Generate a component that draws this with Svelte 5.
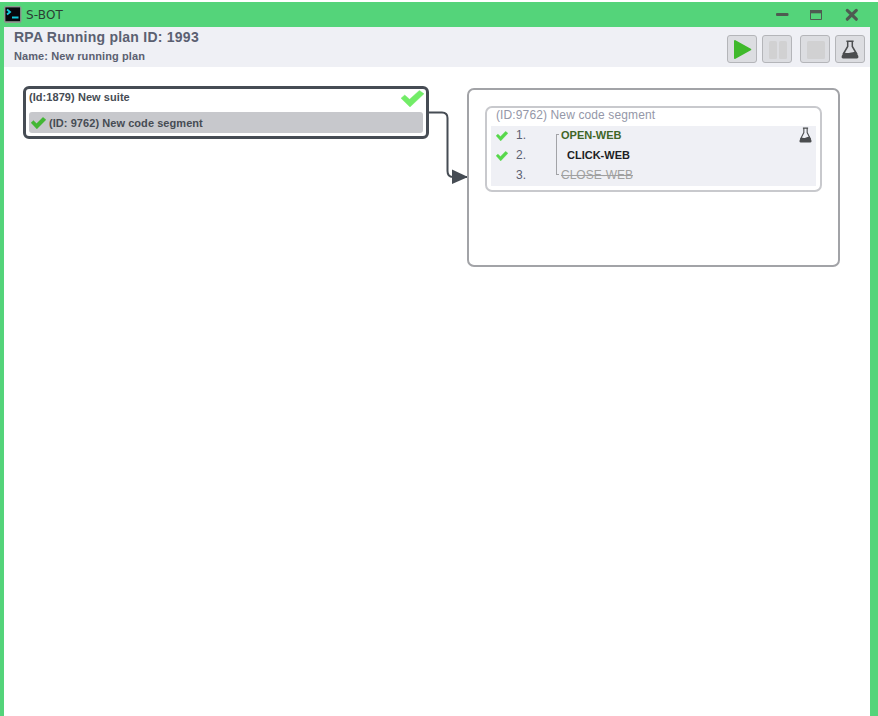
<script>
  const steps = [
    { n: '1.', label: 'OPEN-WEB', kind: 'open', done: true },
    { n: '2.', label: 'CLICK-WEB', kind: 'click', done: true },
    { n: '3.', label: 'CLOSE-WEB', kind: 'close', done: false }
  ];
</script>

{#snippet check(w, h, color)}
  <svg width={w} height={h} viewBox="0 0 22 17" preserveAspectRatio="none">
    <path d="M0 8.2 3.6 5 8.2 9.2 17.6 .4 22 3.8 8.6 17Z" fill={color} stroke={color} stroke-width=".4" />
  </svg>
{/snippet}

{#snippet flask(w, h)}
  <svg width={w} height={h} viewBox="0 0 18 19" preserveAspectRatio="none">
    <path d="M5.4 1.2H12.6M6.7 1.5V6.5L2 14.5M11.3 1.5V6.5L16 14.5" fill="none" stroke="#4b4d4f" stroke-width="1.5" />
    <path d="M3 12.2Q6 13.6 9 12.8T14.6 11.4L17.2 15.8Q18 18.4 15.8 18.4H2.2Q0 18.4 .8 15.8Z" fill="#4b4d4f" />
  </svg>
{/snippet}

<div class="window">
  <div class="title">
    <svg class="term" width="18" height="17" viewBox="0 0 18 17">
      <rect x=".5" y=".5" width="16.5" height="16" rx="1.5" fill="#737b76" stroke="#8f9993" />
      <rect x="1.5" y="1.5" width="14.5" height="13.5" fill="#07070d" />
      <path d="M3 3.5 6 6 3 8.5M8 11.5H14.5" fill="none" stroke="#12c9dc" stroke-width="1.9" />
    </svg>
    <span class="app">S-BOT</span>
    <svg class="controls" width="84" height="14" viewBox="0 0 84 14">
      <rect x="1" y="5" width="12.5" height="3" rx="1" fill="#4e5b51" />
      <path d="M35.5 2.5H46.5V11.5H35.5Z" fill="none" stroke="#4e5b51" />
      <rect x="35" y="2" width="12" height="3.3" fill="#4e5b51" />
      <path d="M72.3 2.4 81.3 11.2M81.3 2.4 72.3 11.2" stroke="#4e5b51" stroke-width="3.2" stroke-linecap="round" />
    </svg>
  </div>
  <div class="header">
    <div class="heading">
      <div class="plan">RPA Running plan ID: 1993</div>
      <div class="name">Name: New running plan</div>
    </div>
    <div class="tools">
      <button aria-label="Run"><svg width="28" height="26"><path d="M7 5 22.3 13.5 7 22Z" fill="#3fb92b" stroke="#3fb92b" stroke-width="2" stroke-linejoin="round" /></svg></button>
      <button aria-label="Pause"><svg width="28" height="26"><rect x="6" y="5" width="8" height="18" rx="1.5" fill="#d1d1d2" /><rect x="16" y="5" width="8" height="18" rx="1.5" fill="#d1d1d2" /></svg></button>
      <button class="stop" aria-label="Stop"><svg width="28" height="26"><rect x="6" y="5" width="18" height="18" rx="1.5" fill="#d1d1d2" /></svg></button>
      <button aria-label="Test">{@render flask(18, 19)}</button>
    </div>
  </div>
  <div class="canvas">
    <section class="suite">
      <div class="suite-head"><span>(Id:1879) New suite</span>{@render check(23, 17, '#72ec67')}</div>
      <div class="suite-item">{@render check(15, 12, '#43b735')}<span>(ID: 9762) New code segment</span></div>
    </section>
    <svg class="link" width="44" height="78" viewBox="0 0 44 78">
      <path d="M0 4.5H13Q18.5 4.5 18.5 10V63Q18.5 69 24 69H39" fill="none" stroke="#464c54" stroke-width="2" />
      <path d="M23 61.5 39 69 23 76Z" fill="#464c54" />
    </svg>
    <section class="panel">
      <div class="segment">
        <div class="segment-title">(ID:9762) New code segment</div>
        <div class="steps">
          {#each steps as s}
            <div class="row">
              <span class="state">{#if s.done}{@render check(12, 10, '#57d84b')}{/if}</span>
              <span class="num">{s.n}</span>
              <span class="tree {s.kind}"></span>
              <span class="label {s.kind}">{s.label}</span>
              {#if s.kind === 'open'}<span class="lab">{@render flask(13, 16)}</span>{/if}
            </div>
          {/each}
        </div>
      </div>
    </section>
  </div>
</div>

<style>
  :global(body) { margin: 0; background: #fff; overflow: hidden; }
  svg { display: block; flex: none; }
  .window {
    box-sizing: border-box; width: 878px; height: 716px; padding-top: 2px;
    font-family: "Liberation Sans", Arial, sans-serif; color: #464c54;
    display: flex; flex-direction: column; white-space: nowrap;
  }
  .title { height: 25px; flex: none; background: #54d47a; display: flex; align-items: center; padding: 0 19px 0 4px; }
  .app { font: 12px/16px "DejaVu Sans", sans-serif; color: #2b3d33; margin-left: 4px; letter-spacing: .15px; }
  .controls { margin-left: auto; }
  .header {
    box-sizing: border-box; height: 40px; flex: none; background: #eff0f5;
    border-left: 4px solid #54d47a; border-right: 8px solid #54d47a;
    display: flex; justify-content: space-between; padding: 0 5px 0 10px;
  }
  .heading { font-weight: bold; color: #5b6071; }
  .plan { font-size: 14px; line-height: 20px; letter-spacing: .24px; }
  .name { font-size: 11px; line-height: 18px; letter-spacing: .09px; }
  .tools { display: flex; gap: 5px; padding-top: 8px; }
  button {
    box-sizing: border-box; width: 30px; height: 28px; padding: 0; display: grid; place-items: center;
    border: 1px solid #b4b5b9; border-radius: 3px; background: #dcdde1;
  }
  .stop { margin-left: 3px; }
  .canvas {
    flex: 1; position: relative; background: #fff;
    border-left: 4px solid #54d47a; border-right: 8px solid #54d47a;
  }
  .suite {
    position: absolute; left: 19px; top: 19px; box-sizing: border-box; width: 406px; height: 53px;
    border: 3px solid #464c54; border-radius: 6px; padding: 1px 2px 1px 3px; font-weight: bold; font-size: 11px;
  }
  .suite-head { display: flex; justify-content: space-between; height: 22px; line-height: 15px; letter-spacing: .06px; }
  .suite-item {
    display: flex; align-items: center; gap: 3px; height: 21px; background: #c7c8cc;
    border-radius: 3px; padding-left: 2px; margin-right: 1px; letter-spacing: .06px;
  }
  .link { position: absolute; left: 425px; top: 41px; }
  .panel {
    position: absolute; left: 463px; top: 21px; box-sizing: border-box; width: 373px; height: 179px;
    border: 2px solid #a2a3a7; border-radius: 7px; padding: 16px;
  }
  .segment { box-sizing: border-box; width: 337px; height: 86px; border: 2px solid #c8c9cd; border-radius: 7px; padding: 0 4px 0 4px; }
  .segment-title { height: 18px; line-height: 15px; font-size: 12px; color: #9497a8; padding-left: 5px; letter-spacing: .12px; }
  .steps { background: #eff0f5; }
  .row { display: flex; height: 20px; line-height: 18px; font-size: 12px; color: #5b6071; }
  .state { box-sizing: border-box; width: 24px; padding: 5px 0 0 5px; }
  .num { box-sizing: border-box; width: 41px; padding-left: 1px; }
  .tree { box-sizing: border-box; width: 3px; border-left: 1px solid #a2a3a7; }
  .tree.open { height: 12px; margin-top: 8px; border-top: 1px solid #a2a3a7; }
  .tree.close { height: 9px; border-bottom: 1px solid #a2a3a7; }
  .label { padding-left: 2px; font-size: 11px; font-weight: bold; }
  .label.open { color: #3f6628; }
  .label.click { color: #1d1f24; padding-left: 8px; }
  .label.close { color: #a0a0a0; font-size: 12px; font-weight: normal; text-decoration: line-through; }
  .lab { margin-left: auto; padding: 1px 4px 0 0; }
</style>
